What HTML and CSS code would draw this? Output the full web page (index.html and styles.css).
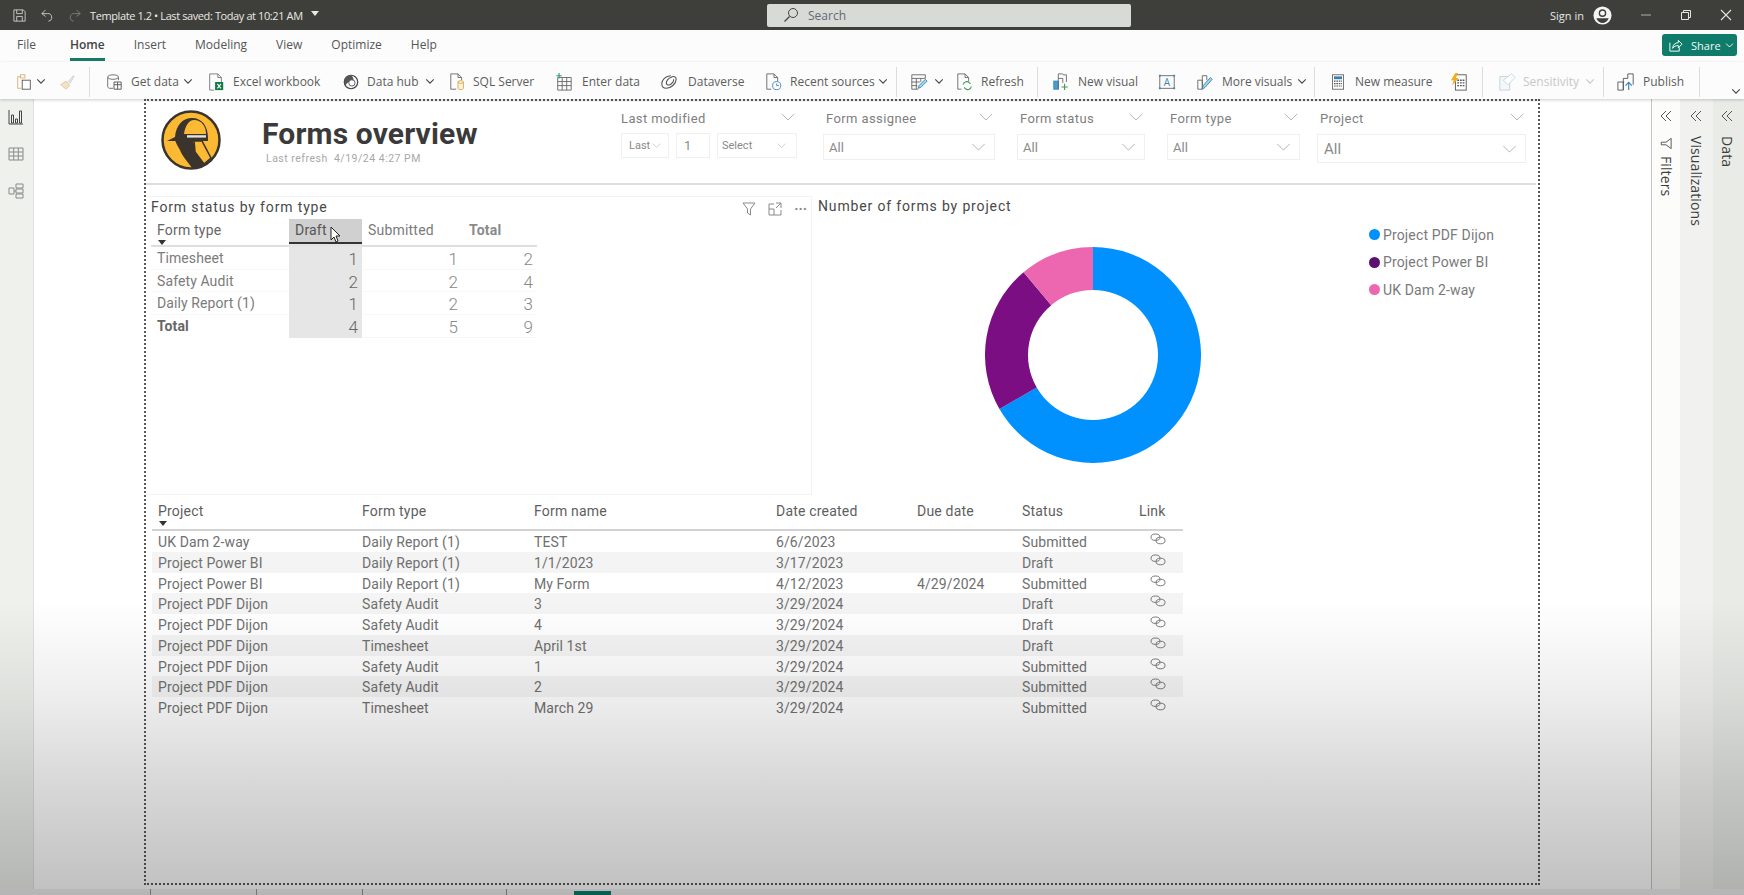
FILE: index.html
```html
<!DOCTYPE html>
<html lang="en">
<head>
<meta charset="utf-8">
<title>Forms overview</title>
<link rel="stylesheet" href="styles.css">
</head>
<body>
<svg class="defs" width="0" height="0" aria-hidden="true">
  <symbol id="chev" viewBox="0 0 12 8"><path d="M1.5 1.5 6 6l4.500-4.500" fill="none" stroke="currentColor" stroke-width="1.300"/></symbol>
  <symbol id="chevthin" viewBox="0 0 16 9"><path d="M1 1l7 7 7-7" fill="none" stroke="currentColor" stroke-width="1"/></symbol>
  <symbol id="dbl" viewBox="0 0 12 12"><path d="M6 1 1 6l5 5M11 1 6 6l5 5" fill="none" stroke="currentColor" stroke-width="1"/></symbol>
  <symbol id="link" viewBox="0 0 16 12"><ellipse cx="5.500" cy="4.200" rx="4.500" ry="3.200" fill="none" stroke="currentColor"/><ellipse cx="10.500" cy="7.500" rx="4.500" ry="3.300" fill="none" stroke="currentColor"/></symbol>
</svg>
<div class="app">
  <header class="titlebar">
    <div class="tb-left">
      <svg class="tb-ic" viewBox="0 0 16 16"><path d="M2 2h10l2 2v10H2zM5 2v4h6V2M5 14V9h6v5" fill="none" stroke="#c8cac5"/></svg>
      <svg class="tb-ic tb-undo" viewBox="0 0 16 16"><path d="M7 2 3 6l4 3M3 6h6a4 4 0 0 1 1 8" fill="none" stroke="#c8cac5"/></svg>
      <svg class="tb-ic tb-redo" viewBox="0 0 16 16"><path d="m9 2 4 4-4 3M13 6H7a4 4 0 0 0-1 8" fill="none" stroke="#7c7e79"/></svg>
      <span class="tb-doc">Template 1.2 • Last saved: Today at 10:21 AM</span>
      <span class="tb-caret"></span>
    </div>
    <div class="search">
      <svg class="search-ic" viewBox="0 0 16 16"><circle cx="10" cy="6" r="4.500" fill="none" stroke="#444"/><path d="M6.500 9.500 1.500 14.500" stroke="#444" stroke-width="1.200"/></svg>
      <span>Search</span>
    </div>
    <div class="tb-right">
      <span class="signin">Sign in</span>
      <svg class="avatar" viewBox="0 0 20 20"><circle cx="10" cy="10" r="9.500" fill="#f4f4f2"/><circle cx="10" cy="7.500" r="3.300" fill="none" stroke="#3e3f3b" stroke-width="1.400"/><path d="M3.500 13h13c-1 3-4 5-6.500 5s-5.500-2-6.500-5z" fill="#3e3f3b"/></svg>
      <svg class="win-ic" viewBox="0 0 12 12"><path d="M1 6h10" stroke="#9a9c97" stroke-width="1.200"/></svg>
      <svg class="win-ic" viewBox="0 0 12 12"><path d="M1.500 3.500h7v7h-7zM3.500 3.500v-2h7v7h-2" fill="none" stroke="#e4e4e2"/></svg>
      <svg class="win-ic" viewBox="0 0 12 12"><path d="m1 1 10 10M11 1 1 11" stroke="#e4e4e2" stroke-width="1.100"/></svg>
    </div>
  </header>

  <nav class="tabs">
    <span class="tab">File</span>
    <span class="tab tab-home">Home</span>
    <span class="tab">Insert</span>
    <span class="tab">Modeling</span>
    <span class="tab">View</span>
    <span class="tab">Optimize</span>
    <span class="tab">Help</span>
    <button class="share">
      <svg class="share-ic" viewBox="0 0 16 16"><path d="M2 5v9h10V10" fill="none" stroke="#fff"/><path d="M5 11c0-4 3-6 6-6V2.500L15 6.500l-4 4V8C8 8 6.500 9 5 11z" fill="none" stroke="#fff"/></svg>
      <span>Share</span>
      <svg class="share-chev"><use href="#chev"/></svg>
    </button>
  </nav>

  <div class="ribbon">
    <div class="ri rb-paste">
      <svg class="ic" viewBox="0 0 20 20"><path d="M6 4H3v13h4" fill="none" stroke="#d9b36c"/><rect x="6" y="2" width="5" height="3.500" fill="none" stroke="#d9b36c"/><rect x="8" y="8" width="9" height="10" fill="#fff" stroke="#555"/></svg>
      <svg class="chv"><use href="#chev"/></svg>
    </div>
    <div class="ri rb-brush">
      <svg class="ic" viewBox="0 0 20 20"><path d="M3 13l6-4 4 5-4 4z" fill="#f2e3c4" stroke="#dcc9a4"/><path d="m11 10 6-7 1 1-5 8" fill="#e8e8e8" stroke="#cfcfcf"/></svg>
    </div>
    <i class="sep sep-a"></i>
    <div class="ri rb-getdata">
      <svg class="ic" viewBox="0 0 20 20"><path d="M9 17H5c-1 0-2-1-2-2V5" fill="none" stroke="#666"/><path d="M15 8V5" fill="none" stroke="#666"/><ellipse cx="9" cy="4.500" rx="6" ry="2.500" fill="none" stroke="#666"/><path d="M10 10h8v8h-8zM10 13h8M14 10v8" fill="none" stroke="#555"/></svg>
      <span>Get data</span><svg class="chv"><use href="#chev"/></svg>
    </div>
    <div class="ri rb-excel">
      <svg class="ic" viewBox="0 0 20 20"><path d="M8 19H3V1h9l4 4v5M12 1v4h4" fill="none" stroke="#777"/><rect x="9" y="10" width="9" height="9" fill="#107c41"/><path d="m11.500 12 4 5M15.500 12l-4 5" stroke="#fff" stroke-width="1.200"/></svg>
      <span>Excel workbook</span>
    </div>
    <div class="ri rb-hub">
      <svg class="ic" viewBox="0 0 20 20"><circle cx="10" cy="10" r="7.500" fill="none" stroke="#444" stroke-width="1.300"/><path d="M10 2.500A7.500 7.500 0 0 0 4 14c2-4 5-5 9-5 0-3-1-5-3-6.500z" fill="#555"/><circle cx="11" cy="11" r="3.500" fill="#fff" stroke="#555"/></svg>
      <span>Data hub</span><svg class="chv"><use href="#chev"/></svg>
    </div>
    <div class="ri rb-sql">
      <svg class="ic" viewBox="0 0 20 20"><path d="M8 18H2V1h8l4 4v3M10 1v4h4" fill="none" stroke="#666"/><path d="M10 10v7c0 2 6 2 6 0v-7" fill="#fff3d8" stroke="#d4a850"/><ellipse cx="13" cy="10" rx="3" ry="1.500" fill="#fff3d8" stroke="#d4a850"/></svg>
      <span>SQL Server</span>
    </div>
    <div class="ri rb-enter">
      <svg class="ic" viewBox="0 0 20 20"><path d="M3 5h15v14H3zM3 9.500h15M3 14h15M8 5v14M13 5v14" fill="none" stroke="#666"/><path d="M4.500 0v6M1.500 3h6" stroke="#2a9d6a" stroke-width="1.200"/></svg>
      <span>Enter data</span>
    </div>
    <div class="ri rb-verse">
      <svg class="ic" viewBox="0 0 20 20"><path d="M12 3C6 3 2 8 2 12c0 3 2 5 5 5 5 0 11-5 11-10 0-3-3-4-6-2-3 1-5 4-5 6 0 2 2 3 4 2s5-4 4-6" fill="none" stroke="#555" stroke-width="1.200"/></svg>
      <span>Dataverse</span>
    </div>
    <div class="ri rb-recent">
      <svg class="ic" viewBox="0 0 20 20"><path d="M7 18H2V1h8l4 4v4M10 1v4h4" fill="none" stroke="#666"/><circle cx="13" cy="14" r="4.500" fill="#fff" stroke="#3a86b8"/><path d="M13 11.500V14h2.500" fill="none" stroke="#3a86b8"/></svg>
      <span>Recent sources</span><svg class="chv"><use href="#chev"/></svg>
    </div>
    <i class="sep sep-b"></i>
    <div class="ri rb-transform">
      <svg class="ic" viewBox="0 0 20 20"><path d="M2 2h15v4H2zM2 6v12h7M2 10h9M2 14h6M7 6v12M12 6v4" fill="none" stroke="#666"/><path d="m9 17 1-3 7-7 2 2-7 7z" fill="#a8d4ea" stroke="#3a86b8"/></svg>
      <svg class="chv"><use href="#chev"/></svg>
    </div>
    <div class="ri rb-refresh">
      <svg class="ic" viewBox="0 0 20 20"><path d="M6 18H2V1h8l4 4v4M10 1v4h4" fill="none" stroke="#666"/><path d="M8 13a4 4 0 0 1 7-2l1 1M17 15a4 4 0 0 1-7 2l-1-1" fill="none" stroke="#3f9a5b" stroke-width="1.200"/></svg>
      <span>Refresh</span>
    </div>
    <i class="sep sep-c"></i>
    <div class="ri rb-newvis">
      <svg class="ic" viewBox="0 0 20 20"><rect x="2" y="9" width="5" height="9" fill="#4a9ad4" stroke="#3a86b8"/><path d="M7 18V6h5v5M12 1h-5v5" fill="none" stroke="#666"/><path d="M14 12v7M10.500 15.500h7" stroke="#3f9a5b" stroke-width="1.200"/><path d="M12 2h4v8" fill="none" stroke="#666"/></svg>
      <span>New visual</span>
    </div>
    <div class="ri rb-textbox">
      <svg class="ic" viewBox="0 0 20 20"><rect x="2" y="3" width="16" height="14" fill="none" stroke="#666"/><rect x="1" y="2" width="2" height="2" fill="#3a86b8"/><rect x="17" y="2" width="2" height="2" fill="#3a86b8"/><rect x="1" y="16" width="2" height="2" fill="#3a86b8"/><rect x="17" y="16" width="2" height="2" fill="#3a86b8"/><text x="6.500" y="14" class="ic-a">A</text></svg>
    </div>
    <div class="ri rb-morevis">
      <svg class="ic" viewBox="0 0 20 20"><path d="M2 8h5v10H2zM7 18V3h5v5" fill="none" stroke="#666"/><path d="m7 18 1-4 8-9 2 2-8 9z" fill="#a8d4ea" stroke="#3a86b8"/></svg>
      <span>More visuals</span><svg class="chv"><use href="#chev"/></svg>
    </div>
    <i class="sep sep-d"></i>
    <div class="ri rb-measure">
      <svg class="ic ic-calc" viewBox="0 0 20 20"><rect x="3" y="1" width="14" height="18" fill="#fff" stroke="#555"/><rect x="5" y="3" width="10" height="3.500" fill="#3a7cb0"/><path d="M5 9h10M5 12h10M5 15h10" stroke="#555" stroke-width="1.500" stroke-dasharray="2 1"/></svg>
      <span>New measure</span>
    </div>
    <div class="ri rb-quick">
      <svg class="ic" viewBox="0 0 20 20"><rect x="6" y="2" width="12" height="17" fill="#fff" stroke="#555"/><path d="M8 8h8M8 11h8M8 14h8" stroke="#555" stroke-width="1.500" stroke-dasharray="2 1"/><path d="M6 0 1 8h3L2.500 14l7-8.500H6.500L9 0z" fill="#f2ae1c"/></svg>
    </div>
    <i class="sep sep-e"></i>
    <div class="ri rb-sens">
      <svg class="ic" viewBox="0 0 20 20"><path d="M2 4h11v15H2z" fill="#f2f7f9" stroke="#c4d3da"/><path d="M6 8l9-7 4 4-8 8z" fill="#fff" stroke="#c4d3da"/></svg>
      <span>Sensitivity</span><svg class="chv"><use href="#chev"/></svg>
    </div>
    <i class="sep sep-f"></i>
    <div class="ri rb-publish">
      <svg class="ic" viewBox="0 0 20 20"><path d="M1 10h6v9H1zM7 19V6h5V1h6v12M7 10h1" fill="none" stroke="#555"/><path d="M13 19v-8M9.500 14l3.500-3.500 3.500 3.500" fill="none" stroke="#3a86b8" stroke-width="1.300"/></svg>
      <span>Publish</span>
    </div>
    <i class="sep"></i>
    <svg class="chv rb-collapse"><use href="#chev"/></svg>
  </div>

  <div class="main">
    <aside class="rail">
      <svg class="rail-ic" viewBox="0 0 16 16"><path d="M1 1v14h14" fill="none" stroke="#444"/><path d="M3.500 6h2v8h-2zM7.500 10h2v4h-2zM11.500 2h2v12h-2z" fill="none" stroke="#444"/></svg>
      <svg class="rail-ic" viewBox="0 0 16 16"><path d="M1 2h14v12H1zM1 6h14M1 10h14M5.700 2v12M10.300 2v12" fill="none" stroke="#8a8a8a"/></svg>
      <svg class="rail-ic" viewBox="0 0 16 16"><path d="M8 1h7v4H8zM8 6h7v4H8zM8 11h7v4H8zM1 5h5v6H1zM6 8h2" fill="none" stroke="#8a8a8a"/></svg>
    </aside>

    <section class="workspace">
      <div class="canvas">
        <div class="report-head">
          <svg class="logo" viewBox="0 0 60 60">
            <circle cx="30" cy="30" r="28.500" fill="#fbb934" stroke="#3a342c" stroke-width="2.500"/>
            <path d="M6 31l8-4C15 15 22 8 31 8c10 0 16 8 16 20v3H30z" fill="#3a342c"/>
            <path d="M23 24c1-8 5-14 10-14 8 0 12 7 12 14z" fill="#fbb934"/>
            <rect x="26" y="25.200" width="19" height="2.400" fill="#e4e2da"/>
            <path d="M14 30h18l3 12 8 12c-4 3-8 4-12 4-4-6-10-12-12-18-2-3-4-7-5-10z" fill="#3a342c"/>
            <path d="M33 31h8l9 17-7 6-9-12z" fill="#fbb934" stroke="#3a342c" stroke-width="1.600"/>
          </svg>
          <div class="report-title">
            <h1>Forms overview</h1>
            <p>Last refresh &nbsp;4/19/24 4:27 PM</p>
          </div>
          <div class="slicers">
            <div class="slicer s-modified">
              <div class="sl-label"><span>Last modified</span><svg class="sl-chev"><use href="#chevthin"/></svg></div>
              <div class="sl-boxes">
                <div class="sl-box box-last"><span>Last</span><svg class="sl-mini"><use href="#chevthin"/></svg></div>
                <div class="sl-box box-num"><span>1</span></div>
                <div class="sl-box box-sel"><span>Select</span><svg class="sl-mini"><use href="#chevthin"/></svg></div>
              </div>
            </div>
            <div class="slicer s-assignee">
              <div class="sl-label"><span>Form assignee</span><svg class="sl-chev"><use href="#chevthin"/></svg></div>
              <div class="sl-box"><span>All</span><svg class="sl-chev"><use href="#chevthin"/></svg></div>
            </div>
            <div class="slicer s-status">
              <div class="sl-label"><span>Form status</span><svg class="sl-chev"><use href="#chevthin"/></svg></div>
              <div class="sl-box"><span>All</span><svg class="sl-chev"><use href="#chevthin"/></svg></div>
            </div>
            <div class="slicer s-type">
              <div class="sl-label"><span>Form type</span><svg class="sl-chev"><use href="#chevthin"/></svg></div>
              <div class="sl-box"><span>All</span><svg class="sl-chev"><use href="#chevthin"/></svg></div>
            </div>
            <div class="slicer s-project">
              <div class="sl-label"><span>Project</span><svg class="sl-chev"><use href="#chevthin"/></svg></div>
              <div class="sl-box sl-big"><span>All</span><svg class="sl-chev"><use href="#chevthin"/></svg></div>
            </div>
          </div>
        </div>

        <div class="visuals">
          <div class="matrix-card">
            <div class="card-head">
              <h2>Form status by form type</h2>
              <div class="card-tools">
                <svg class="tool" viewBox="0 0 14 14"><path d="M1 1h12L8.500 7v6l-3-2V7z" fill="none" stroke="#8a8a8a"/></svg>
                <svg class="tool" viewBox="0 0 14 14"><path d="M6 2H1v11h12V8M8 1h5v5M13 1 8 6M1 7h5v6" fill="none" stroke="#8a8a8a"/></svg>
                <span class="dots">···</span>
              </div>
            </div>
            <div class="matrix">
              <div class="mh"><span>Form type</span><i class="sort"></i></div>
              <div class="mh mh-draft"><span>Draft</span>
                <svg class="cursor" viewBox="0 0 12 18"><path d="M1 1v13l3-3 2 5 2-1-2-5h4z" fill="#fff" stroke="#222"/></svg>
              </div>
              <div class="mh mh-p5"><span>Submitted</span></div>
              <div class="mh mh-p5 mh-total"><span>Total</span></div>

              <div class="mc mc-l">Timesheet</div><div class="mc mc-n mc-d">1</div><div class="mc mc-n">1</div><div class="mc mc-n mc-e">2</div>
              <div class="mc mc-l">Safety Audit</div><div class="mc mc-n mc-d">2</div><div class="mc mc-n">2</div><div class="mc mc-n mc-e">4</div>
              <div class="mc mc-l">Daily Report (1)</div><div class="mc mc-n mc-d">1</div><div class="mc mc-n">2</div><div class="mc mc-n mc-e">3</div>
              <div class="mc mc-l mc-b">Total</div><div class="mc mc-n mc-d">4</div><div class="mc mc-n">5</div><div class="mc mc-n mc-e">9</div>
            </div>
          </div>

          <div class="donut-card">
            <div class="donut-main">
              <h2>Number of forms by project</h2>
              <svg class="donut" viewBox="0 0 216 216">
                <path d="M108 0A108 108 0 1 1 14.470 162L51.710 140.500A65 65 0 1 0 108 43Z" fill="#0091ff"/>
                <path d="M14.470 162A108 108 0 0 1 38.580 25.270L66.220 58.210A65 65 0 0 0 51.710 140.500Z" fill="#7a0e82"/>
                <path d="M38.580 25.270A108 108 0 0 1 108 0V43A65 65 0 0 0 66.220 58.210Z" fill="#ec66b0"/>
              </svg>
            </div>
            <ul class="legend">
              <li><i class="dot d-blue"></i>Project PDF Dijon</li>
              <li><i class="dot d-purple"></i>Project Power BI</li>
              <li><i class="dot d-pink"></i>UK Dam 2-way</li>
            </ul>
          </div>
        </div>

        <div class="grid-table">
          <div class="tr th">
            <div><span>Project</span><i class="sort"></i></div><div>Form type</div><div>Form name</div><div>Date created</div><div>Due date</div><div>Status</div><div>Link</div>
          </div>
          <div class="tr"><div>UK Dam 2-way</div><div>Daily Report (1)</div><div>TEST</div><div>6/6/2023</div><div></div><div>Submitted</div><div class="lk"><svg><use href="#link"/></svg></div></div>
          <div class="tr"><div>Project Power BI</div><div>Daily Report (1)</div><div>1/1/2023</div><div>3/17/2023</div><div></div><div>Draft</div><div class="lk"><svg><use href="#link"/></svg></div></div>
          <div class="tr"><div>Project Power BI</div><div>Daily Report (1)</div><div>My Form</div><div>4/12/2023</div><div>4/29/2024</div><div>Submitted</div><div class="lk"><svg><use href="#link"/></svg></div></div>
          <div class="tr"><div>Project PDF Dijon</div><div>Safety Audit</div><div>3</div><div>3/29/2024</div><div></div><div>Draft</div><div class="lk"><svg><use href="#link"/></svg></div></div>
          <div class="tr"><div>Project PDF Dijon</div><div>Safety Audit</div><div>4</div><div>3/29/2024</div><div></div><div>Draft</div><div class="lk"><svg><use href="#link"/></svg></div></div>
          <div class="tr"><div>Project PDF Dijon</div><div>Timesheet</div><div>April 1st</div><div>3/29/2024</div><div></div><div>Draft</div><div class="lk"><svg><use href="#link"/></svg></div></div>
          <div class="tr"><div>Project PDF Dijon</div><div>Safety Audit</div><div>1</div><div>3/29/2024</div><div></div><div>Submitted</div><div class="lk"><svg><use href="#link"/></svg></div></div>
          <div class="tr"><div>Project PDF Dijon</div><div>Safety Audit</div><div>2</div><div>3/29/2024</div><div></div><div>Submitted</div><div class="lk"><svg><use href="#link"/></svg></div></div>
          <div class="tr"><div>Project PDF Dijon</div><div>Timesheet</div><div>March 29</div><div>3/29/2024</div><div></div><div>Submitted</div><div class="lk"><svg><use href="#link"/></svg></div></div>
        </div>
      </div>
    </section>

    <aside class="panels">
      <div class="panel p-filters">
        <svg class="dbl"><use href="#dbl"/></svg>
        <svg class="p-filter-ic" viewBox="0 0 14 14"><path d="M13 1v12L7 8.500H1.500v-3H7z" fill="none" stroke="#444"/></svg>
        <span class="p-text">Filters</span>
      </div>
      <div class="panel p-vis">
        <svg class="dbl"><use href="#dbl"/></svg>
        <span class="p-text p-text-gap">Visualizations</span>
      </div>
      <div class="panel p-data">
        <svg class="dbl"><use href="#dbl"/></svg>
        <span class="p-text p-text-gap">Data</span>
      </div>
    </aside>
  </div>

  <footer class="pagebar">
    <i class="pb-tick pb-1"></i><i class="pb-tick pb-2"></i><i class="pb-tick pb-3"></i><i class="pb-tick pb-4"></i><i class="pb-active"></i>
  </footer>
  <div class="fade"></div>
</div>
</body>
</html>
```

FILE: styles.css
```css
* { box-sizing: border-box; }
html, body { margin: 0; padding: 0; background: #fff; }
body { font-family: "Open Sans", "Liberation Sans", sans-serif; color: #555; }
.defs { position: absolute; }
h1, h2, p, ul { margin: 0; padding: 0; }
svg { display: block; flex: none; }

.app { position: relative; width: 1744px; height: 895px; overflow: hidden; display: flex; flex-direction: column; }
.fade { position: absolute; inset: 0; pointer-events: none;
  background: linear-gradient(to bottom, rgba(0,0,0,0) 67%, rgba(0,0,0,.07) 78%, rgba(0,0,0,.15) 87%, rgba(0,0,0,.24) 99%, rgba(0,0,0,.25) 100%); }

/* title bar */
.titlebar { height: 30px; flex: none; background: #3e3f3b; display: flex; align-items: center; color: #e8e8e6; font-size: 11px; }
.tb-left { width: 767px; flex: none; display: flex; align-items: center; padding-left: 12px; }
.tb-ic { width: 15px; height: 15px; }
.tb-undo { margin-left: 12px; }
.tb-redo { margin-left: 14px; }
.tb-doc { margin-left: 7px; white-space: nowrap; letter-spacing: -.4px; }
.tb-caret { margin-left: 8px; margin-top: -3px; border: 4px solid transparent; border-top: 5px solid #e8e8e6; border-bottom: 0; }
.search { width: 364px; height: 23px; flex: none; background: #d8dbd5; border-radius: 2px; display: flex; align-items: center; padding-left: 16px; color: #667; font-size: 12px; }
.search-ic { width: 16px; height: 16px; margin-right: 9px; }
.tb-right { flex: 1; display: flex; align-items: center; padding-left: 419px; }
.signin { white-space: nowrap; font-size: 11px; }
.avatar { width: 19px; height: 19px; margin-left: 9px; }
.win-ic { width: 12px; height: 12px; }
.avatar + .win-ic { margin-left: 28px; }
.win-ic + .win-ic { margin-left: 28px; }

/* tabs */
.tabs { height: 32px; flex: none; background: #fbfcfb; display: flex; align-items: center; gap: 29px; padding: 0 7px 0 17px; font-size: 12px; color: #555; }
.tab { line-height: 28px; height: 30px; }
.tab-home { margin-left: 5px; font-weight: 600; color: #444; border-bottom: 3px solid #167a68; height: 27px; margin-top: 3px; line-height: 22px; }
.share { margin-left: auto; width: 75px; height: 22px; padding: 0 0 0 6px; border: 0; border-radius: 3px; background: #0f7c6b; color: #f2f7f5; display: flex; align-items: center; font: 11px "Open Sans", sans-serif; margin-top: -2px; }
.share-ic { width: 15px; height: 15px; margin-right: 8px; }
.share-chev { width: 9px; height: 7px; margin-left: 4px; }

/* ribbon */
.ribbon { height: 37px; flex: none; background: #fbfcfb; display: flex; align-items: center; padding: 2px 0 0 15px; font-size: 12px; color: #5d5d5d; box-shadow: 0 1px 3px rgba(0,0,0,.2); position: relative; z-index: 2; white-space: nowrap; }
.ri { display: flex; align-items: center; flex: none; height: 100%; gap: 8px; }
.ic { width: 18px; height: 20px; }
.ic-calc { width: 16px; }
.ic-a { font: 11px "Open Sans", sans-serif; fill: #3a86b8; }
.chv { width: 10px; height: 7px; color: #444; margin-left: -3.500px; }
.sep { flex: none; width: 1px; height: 30px; background: #dcdddb; }
.rb-paste { width: 43px; gap: 3px; } .rb-paste .chv { margin-left: 0; }
.rb-brush { width: 31px; }
.sep-a { margin-right: 15px; }
.rb-getdata { width: 102px; }
.rb-excel { width: 135px; }
.rb-hub { width: 107px; gap: 7px; } .rb-hub .chv { margin-left: -.5px; }
.rb-sql { width: 106px; gap: 6px; }
.rb-enter { width: 105px; gap: 9px; }
.rb-verse { width: 105px; gap: 10px; }
.rb-recent { width: 131px; gap: 7px; }
.sep-b { margin-right: 13px; }
.rb-transform { width: 46px; gap: 6px; } .rb-transform .chv { margin-left: 0; }
.rb-refresh { width: 81px; gap: 7px; }
.sep-c { margin-right: 14px; }
.rb-newvis { width: 106px; }
.rb-textbox { width: 38px; }
.rb-morevis { width: 118px; }
.sep-d { margin-right: 15px; }
.rb-measure { width: 120px; gap: 9px; }
.rb-quick { width: 32px; }
.sep-e { margin-right: 15px; }
.rb-sens { width: 105px; gap: 7px; color: #c6c9c8; } .rb-sens .chv { color: #c6c9c8; margin-left: -1px; }
.sep-f { margin-right: 13px; }
.rb-publish { width: 82px; }
.rb-collapse { margin-left: 31px; margin-top: 20px; }

/* main */
.main { flex: 1; min-height: 0; display: flex; background: #fff; }
.rail { width: 34px; flex: none; background: #eff1ed; border-right: 1px solid #e0e1de; display: flex; flex-direction: column; align-items: center; padding-top: 10px; padding-right: 2px; gap: 21px; }
.rail-ic { width: 16px; height: 16px; }
.workspace { flex: 1; min-width: 0; padding-left: 110px; }
.canvas { width: 1396px; height: 786px; border: 2px dotted #5a5a5a; display: flex; flex-direction: column; }

/* report head */
.report-head { height: 84px; flex: none; margin-right: 2px; border-bottom: 2px solid #dedede; display: flex; align-items: flex-start; }
.logo { width: 60px; height: 60px; margin: 9px 0 0 15px; }
.report-title { width: 359px; margin-left: 41px; flex: none; padding-top: 14px; font-family: Roboto, "Liberation Sans", sans-serif; }
h1 { font-size: 30px; font-weight: 700; line-height: 37px; color: #3a3a3a; letter-spacing: .15px; white-space: nowrap; font-family: Roboto, sans-serif; }
.report-title p { font-size: 10.500px; color: #a8a8a8; line-height: 14px; margin: 0 0 0 4px; letter-spacing: .5px; }
.slicers { display: flex; flex: none; padding-top: 7px; font-family: Roboto, sans-serif; color: #808080; }
.slicer { flex: none; display: flex; flex-direction: column; }
.s-modified { width: 176px; }
.s-assignee { width: 172px; margin-left: 26px; }
.s-status { width: 128px; margin-left: 22px; }
.s-type { width: 133px; margin-left: 22px; }
.s-project { width: 209px; margin-left: 17px; }
.sl-label { height: 20px; display: flex; align-items: center; justify-content: space-between; font-size: 13px; letter-spacing: .4px; padding: 0 2px 0 3px; margin-bottom: 6px; white-space: nowrap; }
.s-modified .sl-label { padding-left: 0; }
.sl-chev { width: 14px; height: 8px; color: #aaa; margin-top: -3px; }
.sl-box { height: 26px; border: 1px solid #efefef; display: flex; align-items: center; justify-content: space-between; padding: 0 5px; font-size: 13px; color: #8a8a8a; }
.sl-box .sl-chev { margin: 0 3px 0 0; width: 15px; }
.sl-big { height: 29px; font-size: 15px; padding-left: 6px; }
.sl-boxes { display: flex; gap: 7px; margin-top: -1px; }
.sl-boxes .sl-box { height: 25px; font-size: 11px; padding: 0 7px; }
.sl-boxes .box-sel { padding-left: 4px; }
.box-last { width: 48px; } .box-num { width: 34px; font-size: 13px !important; } .box-sel { width: 80px; flex: none; }
.sl-mini { width: 9px; height: 5px; color: #aaa; }
.box-sel .sl-mini { margin-right: 3px; }

/* visuals */
.visuals { height: 310px; flex: none; display: flex; font-family: Roboto, sans-serif; }
.matrix-card { width: 666px; flex: none; margin-top: 11px; border: 1px solid #f3f3f3; border-left: 0; padding-left: 5px; }
.card-head { display: flex; justify-content: space-between; align-items: center; height: 22px; padding-right: 4px; }
.card-head h2 { margin-top: -2px; }
h2 { font-size: 14px; font-weight: 400; letter-spacing: .85px; color: #484848; line-height: 20px; white-space: nowrap; }
.card-tools { display: flex; align-items: center; gap: 12px; margin-top: 2px; }
.tool { width: 14px; height: 14px; }
.dots { color: #888; font-size: 14px; letter-spacing: 0; line-height: 14px; font-weight: 700; }
.matrix { width: 386px; display: grid; grid-template-columns: 138px 73px 101px 74px; grid-template-rows: 28px repeat(4, 22.700px); font-size: 14px; color: #777; }
.mh { padding: 3px 0 0 6px; border-bottom: 2px solid #dedede; line-height: 17px; letter-spacing: .2px; position: relative; white-space: nowrap; color: #7a7a7a; }
.mh:first-child { color: #666; }
.mh-p5 { padding-left: 6px; }
.mh-total { font-weight: 700; color: #8a8a8a; }
.mh-draft { background: #d0d0d0; box-shadow: inset 0 -1px 0 #e3e3e3, inset 0 -3px 0 #333; border-bottom-color: #e3e3e3; color: #555; }
.sort { display: block; width: 0; margin: 1px 0 0 1px; border: 4px solid transparent; border-top: 5px solid #333; border-bottom: 0; }
.cursor { position: absolute; left: 41px; top: 7px; width: 12px; height: 18px; }
.mc { line-height: 22px; white-space: nowrap; border-bottom: 1px solid #f8f8f8; }
.mc-l { padding-left: 6px; letter-spacing: .1px; color: #7b7b7b; }
.mc-b { font-weight: 700; color: #666; border-bottom: 0; }
.mc-n { text-align: right; padding-right: 5px; font-size: 17px; font-weight: 300; color: #888; line-height: 24px; }
.mc-d { background: #e6e6e6; border-bottom-color: #e6e6e6; padding-right: 4px; color: #666; }
.mc-e { padding-right: 4px; }

.donut-card { flex: 1; min-width: 0; display: flex; }
.donut-main { width: 562px; flex: none; padding: 11px 0 0 6px; }
.donut-main h2 { line-height: 20px; }
.donut { width: 216px; height: 216px; margin: 31px 0 0 167px; }
.legend { list-style: none; padding-top: 36px; font-size: 14px; color: #7a7a7a; letter-spacing: .15px; }
.legend li { height: 27.500px; display: flex; align-items: center; white-space: nowrap; }
.dot { width: 11px; height: 11px; border-radius: 50%; margin-right: 3px; margin-left: -5px; }
.d-blue { background: #0091ff; } .d-purple { background: #5c1070; } .d-pink { background: #ec66b0; }

/* table */
.grid-table { width: 1031px; margin-left: 6px; font-family: Roboto, sans-serif; font-size: 14px; color: #707070; letter-spacing: .1px; }
.tr { display: grid; grid-template-columns: 204px 172px 242px 141px 105px 117px 50px; height: 20.750px; line-height: 23px; white-space: nowrap; }
.tr > div { padding-left: 6px; }
.th { height: 36px; line-height: 17px; padding-top: 8px; border-bottom: 2px solid #d2d2d2; color: #5e5e5e; letter-spacing: .2px; }
.tr:nth-child(odd):not(.th) { background: #f3f4f3; }
.th .sort { margin-top: 1px; margin-left: 1px; }
.lk svg { width: 16px; height: 12px; color: #777; margin: 2px 0 0 11px; }

/* side panels */
.panels { width: 93px; flex: none; display: flex; }
.panel { display: flex; flex-direction: column; align-items: center; padding-top: 11px; color: #3e3e3e; font-size: 14px; }
.p-filters { width: 29px; background: #fcfcfb; border-left: 1px solid #c6c6c6; }
.p-vis { width: 33px; background: #f1f2ef; padding-right: 1px; }
.p-data { width: 31px; background: #e9ebe7; padding-right: 3px; }
.dbl { width: 12px; height: 12px; color: #555; }
.p-filter-ic { width: 12px; height: 13px; margin-top: 15px; }
.p-text { writing-mode: vertical-rl; margin-top: 6px; letter-spacing: .1px; line-height: 16px; }
.p-text-gap { margin-top: 14px; }

/* bottom */
.pagebar { height: 6px; flex: none; background: #f2f2f2; position: relative; display: flex; padding-left: 150px; }
.pb-tick { width: 1px; height: 6px; background: #999; flex: none; }
.pb-2 { margin-left: 105px; } .pb-3 { margin-left: 105px; } .pb-4 { margin-left: 143px; }
.pb-active { width: 37px; height: 4px; margin: 2px 0 0 67px; background: #0f7c6b; flex: none; }
```
